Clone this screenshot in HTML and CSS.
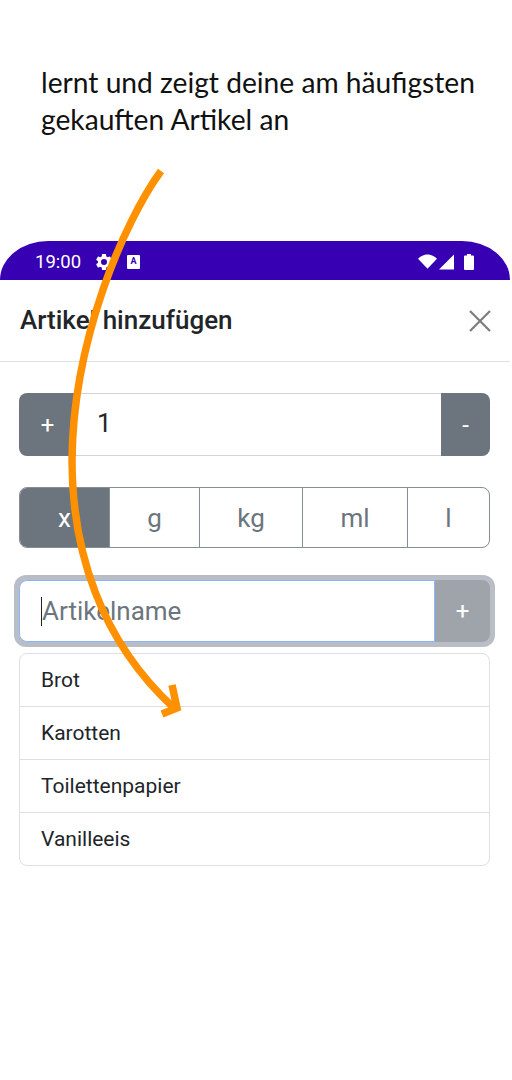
FILE: index.html
```html
<!DOCTYPE html>
<html lang="de">
<head>
    <meta charset="UTF-8">
    <meta name="viewport" content="width=device-width, initial-scale=1.0">
    <title>Artikel hinzufügen</title>
    <link rel="stylesheet" href="styles.css">
</head>
<body>
    <div class="page">
        <p class="caption">lernt und zeigt deine am häufigsten<br>gekauften Artikel an</p>

        <div class="statusbar">
            <div class="status-left">
                <span class="clock">19:00</span>
                <svg class="gear" viewBox="0 0 24 24" width="20" height="20"><path fill="#fff" d="M19.14 12.94c.04-.3.06-.61.06-.94 0-.32-.02-.64-.07-.94l2.03-1.58a.49.49 0 0 0 .12-.61l-1.92-3.32a.49.49 0 0 0-.59-.22l-2.39.96c-.5-.38-1.03-.7-1.62-.94l-.36-2.54a.48.48 0 0 0-.48-.41h-3.84a.48.48 0 0 0-.47.41l-.36 2.54c-.59.24-1.13.57-1.62.94l-2.39-.96a.48.48 0 0 0-.59.22L2.74 8.87a.47.47 0 0 0 .12.61l2.03 1.58c-.05.3-.09.63-.09.94s.02.64.07.94l-2.03 1.58a.49.49 0 0 0-.12.61l1.92 3.32c.12.22.37.29.59.22l2.39-.96c.5.38 1.03.7 1.62.94l.36 2.54c.05.24.24.41.48.41h3.84c.24 0 .44-.17.47-.41l.36-2.54c.59-.24 1.13-.56 1.62-.94l2.39.96c.22.08.47 0 .59-.22l1.92-3.32a.47.47 0 0 0-.12-.61l-2.01-1.58zM12 15.6A3.6 3.6 0 1 1 12 8.4a3.6 3.6 0 0 1 0 7.2z"/></svg>
                <span class="a-badge">A</span>
            </div>
            <div class="status-right">
                <svg class="wifi" viewBox="0 0 20 15" width="19" height="15"><path fill="#fff" d="M0 4.5C2.600 1.700 6.100 0 10 0s7.400 1.700 10 4.500L10 15z"/></svg>
                <svg class="signal" viewBox="0 0 16 16" width="15" height="16"><path fill="#fff" d="M16 0v16H0z"/></svg>
                <svg class="battery" viewBox="0 0 10 16" width="10" height="16"><path fill="#fff" d="M3 0h4v1.500h2a1 1 0 0 1 1 1V15a1 1 0 0 1-1 1H1a1 1 0 0 1-1-1V2.500a1 1 0 0 1 1-1h2z"/></svg>
            </div>
        </div>

        <div class="modal-header">
            <h5 class="modal-title">Artikel hinzufügen</h5>
            <svg class="close" viewBox="0 0 22 22" width="22" height="22"><path d="M1 1l20 20M21 1L1 21" stroke="#7d7d7d" stroke-width="2.200" fill="none"/></svg>
        </div>

        <div class="modal-body">
            <div class="qty-group">
                <button class="btn qty-plus">+</button>
                <div class="qty-value">1</div>
                <button class="btn qty-minus">-</button>
            </div>

            <div class="unit-group">
                <div class="unit unit-x active">x</div>
                <div class="unit unit-g">g</div>
                <div class="unit unit-kg">kg</div>
                <div class="unit unit-ml">ml</div>
                <div class="unit unit-l">l</div>
            </div>

            <div class="name-ring">
                <div class="name-group">
                    <div class="name-input"><span class="caret"></span>Artikelname</div>
                    <button class="btn name-add">+</button>
                </div>
            </div>

            <ul class="list">
                <li>Brot</li>
                <li>Karotten</li>
                <li>Toilettenpapier</li>
                <li>Vanilleeis</li>
            </ul>
        </div>

        <svg class="arrow" viewBox="0 0 512 1080" width="512" height="1080">
            <path d="M161 171C124 222 73 340 72 460C72 550 100 640 174 708" fill="none" stroke="#ff9100" stroke-width="7.500"/>
            <path d="M172 685L177 708L162 714" fill="none" stroke="#ff9100" stroke-width="7.500"/>
        </svg>
    </div>
</body>
</html>
```

FILE: styles.css
```css
* {
    box-sizing: border-box;
}
body {
    margin: 0;
    background: #fff;
    font-family: Roboto, sans-serif;
    color: #212529;
}
.page {
    position: relative;
    width: 510px;
    height: 1080px;
    overflow: hidden;
}
.caption {
    margin: 0;
    height: 241px;
    padding: 64px 0 0 41px;
    font-family: Lato, sans-serif;
    font-size: 28.2px;
    line-height: 37px;
    color: #111;
}
.statusbar {
    height: 39px;
    display: flex;
    justify-content: space-between;
    align-items: center;
    padding: 2px 36px 0 35px;
    background: #3700b3;
    border-radius: 48px 48px 0 0 / 39px 39px 0 0;
    color: #fff;
}
.status-left,
.status-right {
    display: flex;
    align-items: center;
}
.clock {
    font-size: 18.5px;
    margin-right: 13px;
}
.a-badge {
    width: 13px;
    height: 14px;
    margin-left: 13px;
    background: #fff;
    color: #3700b3;
    border-radius: 1px;
    font-size: 9px;
    font-weight: 700;
    line-height: 13px;
    text-align: center;
}
.signal {
    margin-left: 2px;
}
.battery {
    margin-left: 10px;
}
.modal-header {
    height: 82px;
    display: flex;
    justify-content: space-between;
    align-items: center;
    padding: 0 19px 0 20px;
    border-bottom: 1px solid #dee2e6;
}
.modal-title {
    margin: 0 0 2px;
    font-size: 26px;
    font-weight: 500;
    line-height: 30px;
}
.modal-body {
    padding: 31px 20px 0 19px;
}
.btn {
    border: none;
    padding: 0;
    font-family: Roboto, sans-serif;
    font-size: 24px;
    color: #fff;
    background: #6c757d;
}
.qty-group {
    display: flex;
    height: 63px;
}
.qty-plus {
    width: 57px;
    border-radius: 8px 0 0 8px;
}
.qty-minus {
    width: 49px;
    border-radius: 0 8px 8px 0;
}
.qty-value {
    flex: 1;
    padding-left: 21px;
    border-top: 1px solid #ced4da;
    border-bottom: 1px solid #ced4da;
    font-size: 26px;
    line-height: 59px;
    color: #212529;
}
.unit-group {
    display: flex;
    height: 61px;
    margin-top: 31px;
    border: 1px solid #868e96;
    border-radius: 8px;
    overflow: hidden;
}
.unit {
    font-size: 26px;
    line-height: 60px;
    text-align: center;
    color: #6c757d;
    border-left: 1px solid #868e96;
}
.unit.active {
    border-left: none;
    color: #fff;
    background: #6c757d;
}
.unit-x {
    width: 89px;
}
.unit-g {
    width: 90px;
}
.unit-kg {
    width: 103px;
}
.unit-ml {
    width: 105px;
}
.unit-l {
    flex: 1;
}
.name-ring {
    margin: 27px -5px 0;
    padding: 5px;
    border-radius: 12px;
    background: #b9bec6;
}
.name-group {
    display: flex;
    height: 62px;
    border-radius: 8px;
    overflow: hidden;
}
.name-input {
    flex: 1;
    display: flex;
    align-items: center;
    padding-left: 21px;
    background: #fff;
    border: 1px solid #86b7fe;
    border-radius: 8px 0 0 8px;
    font-size: 26px;
    color: #6c757d;
}
.caret {
    width: 1px;
    height: 29px;
    background: #212529;
}
.name-add {
    width: 55px;
    background: #9fa4aa;
}
.list {
    margin: 6px 0 0;
    padding: 0;
    list-style: none;
    border: 1px solid #dfdfdf;
    border-radius: 8px;
}
.list li {
    height: 53px;
    padding-left: 21px;
    border-bottom: 1px solid #dfdfdf;
    font-size: 21px;
    line-height: 53px;
}
.list li:last-child {
    border-bottom: none;
    height: 52px;
}
.arrow {
    position: absolute;
    left: 0;
    top: 0;
}
```
